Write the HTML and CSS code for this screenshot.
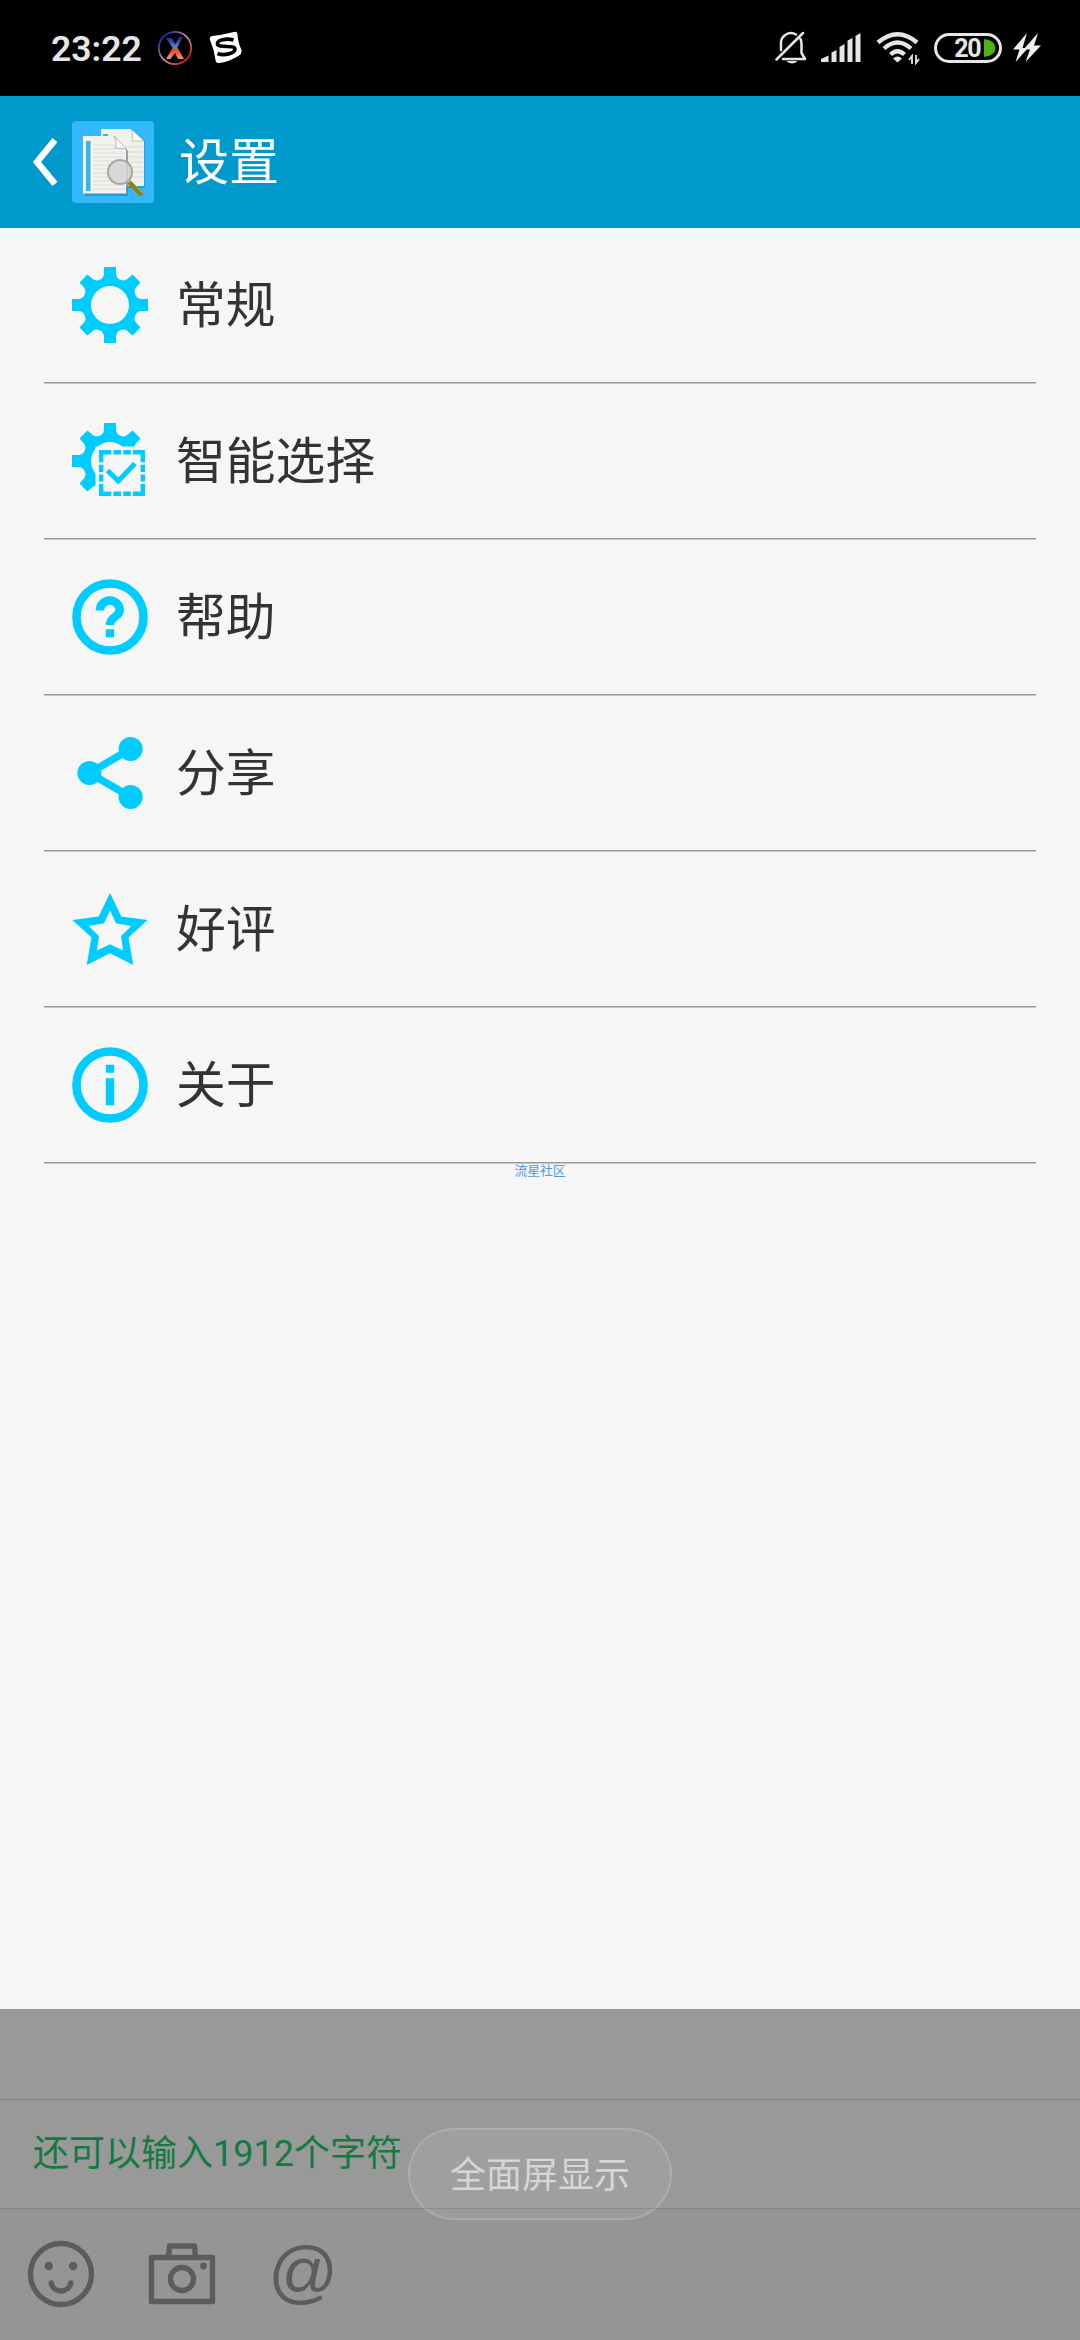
FILE: index.html
```html
<!DOCTYPE html>
<html lang="zh-CN">
<head>
    <meta charset="UTF-8">
    <meta name="viewport" content="width=device-width, initial-scale=1.0">
    <title>设置</title>
    <link rel="stylesheet" href="styles.css">
</head>
<body>
    <div class="status-bar">
        <div class="status-left">
            <span class="time">23:22</span>
            <svg class="logo-x" width="36" height="36" viewBox="0 0 36 36">
                <defs>
                    <linearGradient id="ring" x1="0" y1="0" x2="1" y2="1">
                        <stop offset="0.15" stop-color="#2a2f9c"/>
                        <stop offset="0.5" stop-color="#c79aa8"/>
                        <stop offset="0.85" stop-color="#e8201c"/>
                    </linearGradient>
                    <linearGradient id="cross" x1="0" y1="0" x2="0" y2="1">
                        <stop offset="0.1" stop-color="#2430a0"/>
                        <stop offset="0.45" stop-color="#5f7ccc"/>
                        <stop offset="0.6" stop-color="#f04a24"/>
                        <stop offset="1" stop-color="#ef8f7c"/>
                    </linearGradient>
                </defs>
                <circle cx="18" cy="18" r="16.2" fill="none" stroke="url(#ring)" stroke-width="1.7"/>
                <path d="M9 8h6l3.2 6.2L22 7h4l-5.6 10.5L27 29h-6l-3-6-4.500 6H9l6.600-11z" fill="url(#cross)"/>
            </svg>
            <svg class="logo-s" width="34" height="34" viewBox="0 0 34 34">
                <path d="M3 5Q13 4 25 1Q28 0 28.500 3Q29 12 32.500 19Q33 23 30 24.500Q20 31 10 32Q7 32.500 6.500 29Q5 18 1 9Q0 6 3 5z" fill="#fff"/>
                <path d="M24.500 9C17 7 8 9 8.500 13C9 17.500 26 13.500 26 18C26 22.500 15 25 8.500 22.500" fill="none" stroke="#000" stroke-width="3.700"/>
            </svg>
        </div>
        <div class="status-right">
            <svg width="32" height="34" viewBox="0 0 32 34" fill="none" stroke="#e6e6e6" stroke-width="2.500" stroke-linecap="round" stroke-linejoin="round">
                <path d="M6 19V13A10 10 0 0 1 21 3.500M8 28H30L26.500 22V13Q26.500 10.500 25.500 8M1.500 28.500L28 2"/>
                <path d="M12.500 30.500h9q-4.500 3-9 0z" fill="#e6e6e6" stroke-width="1"/>
            </svg>
            <svg class="signal" width="41" height="30" viewBox="0 0 41 30" fill="#e6e6e6">
                <path d="M1 26L8.500 22.500V29H1zM11.500 19.500L16.500 17V29H11.500zM19.500 14L24.500 11V29H19.500zM27.500 7.500L32.500 5V29H27.500zM35.500 3L40.500 0V29H35.500z"/>
            </svg>
            <svg class="wifi" width="44" height="34" viewBox="0 0 44 34" fill="none" stroke="#e6e6e6" stroke-width="4.300">
                <path d="M2 11.500Q21.500-5 41 11.500M8 17.500Q21.500 5.500 35 17.500M14.500 23.500Q21.500 17 28.500 23.500"/>
                <path d="M17 27.500Q21.500 23.500 26 27.500L21.500 31.500z" fill="#e6e6e6" stroke="none"/>
                <path d="M36 33V25l-3 4M40 24v8l3-4" stroke-width="1.800"/>
            </svg>
            <div class="battery">
                <span>20</span>
                <svg width="13" height="18" viewBox="0 0 13 18"><path d="M1 0Q12 1 12.500 9Q12 17 1 18z" fill="#4bb411"/></svg>
            </div>
            <svg width="30" height="30" viewBox="0 0 30 30" fill="#f0f0f0">
                <path d="M15 0L1 16.500H7.500L3.500 29L16 15H10.500z"/>
                <path d="M26 0L11.500 16.500H18L13.500 29L29 12.500H22z"/>
            </svg>
        </div>
    </div>

    <header class="header">
        <svg class="back" width="24" height="48" viewBox="0 0 24 48" fill="none" stroke="#fff" stroke-width="6.500">
            <path d="M22 2L4 24L22 46"/>
        </svg>
        <svg class="app-icon" width="82" height="82" viewBox="0 0 82 82">
            <rect width="82" height="82" rx="4" fill="#33b9fb"/>
            <path d="M30 9H60L73 20V67H30z" fill="#1c82b8" opacity="0.500"/>
            <path d="M29 8H59L72 20V65H29z" fill="#f1f0ec"/>
            <path d="M31 13h5v3h-5z" fill="#3bb4dc"/>
            <path d="M59 8Q62 14 60 20L72 20z" fill="#fff" stroke="#a9a9a4" stroke-width="0.700"/>
            <path d="M54 26H71M54 31H71M54 36H71M54 41H71M54 46H71M54 51H71M54 56H71" stroke="#d9d7d0"/>
            <path d="M13 17H43L56 30V75H13z" fill="#1c82b8" opacity="0.600"/>
            <path d="M11 15H42L54.500 28V72.500H11z" fill="#f2f1ed"/>
            <path d="M14 20h4.500v50H14z" fill="#35b6de"/>
            <path d="M21 24H42M21 28H44M21 32H53M21 36H53M21 40H53M21 44H53M21 48H53M21 52H53M21 56H53M21 60H53M21 64H53M21 68H53" stroke="#dfddd6"/>
            <path d="M42 15Q46 21 43 27L54.500 28z" fill="#fbfbf9" stroke="#999" stroke-width="0.700"/>
            <path d="M54.500 28V72.500" stroke="#999"/>
            <path d="M57 61L70 74" stroke="#938119" stroke-width="5"/>
            <path d="M58 59L71 72" stroke="#c1b452" stroke-width="1"/>
            <circle cx="48" cy="51" r="12" fill="#d4d4d4" fill-opacity="0.850" stroke="#a6a6a6" stroke-width="2"/>
        </svg>
        <h1>设置</h1>
    </header>

    <ul class="settings">
        <li class="item">
            <svg class="icon" viewBox="-45 -45 90 90">
                <path id="gear" fill-rule="evenodd" d="M-6-38H6V-32A7.200 7.200 0 0 0 18.400-26.900L22.600-30.500L30.500-22.600L26.900-18.400A7.200 7.200 0 0 0 32-6H38V6H32A7.200 7.200 0 0 0 26.900 18.400L30.500 22.600L22.600 30.500L18.400 26.900A7.200 7.200 0 0 0 6 32V38H-6V32A7.200 7.200 0 0 0-18.400 26.900L-22.600 30.500L-30.500 22.600L-26.900 18.400A7.200 7.200 0 0 0-32 6H-38V-6H-32A7.200 7.200 0 0 0-26.900-18.400L-30.500-22.600L-22.600-30.500L-18.400-26.900A7.200 7.200 0 0 0-6-32zM0-19A19 19 0 1 0 0 19A19 19 0 1 0 0-19z"/>
            </svg>
            <span>常规</span>
        </li>
        <li class="item">
            <svg class="icon" viewBox="-45 -45 90 90">
                <use href="#gear"/>
                <rect class="cutout" x="-14.500" y="-14.500" width="59" height="59"/>
                <g class="line">
                    <path stroke-width="4.400" d="M-8.800 1.300V-8.800H1.300M3.500-8.800H11M13.300-8.800H20.800M23-8.800H32.800V1.300M32.800 3.800V11M32.800 13.500V20.500M32.800 23V32.800H23M20.800 32.800H13.300M11 32.800H3.500M1.300 32.800H-8.800V23M-8.800 20.500V13.500M-8.800 11V3.800"/>
                    <path stroke-width="5" d="M-2.500 9.500L8.300 20L25 2.500"/>
                </g>
            </svg>
            <span>智能选择</span>
        </li>
        <li class="item">
            <svg class="icon" viewBox="-45 -45 90 90">
                <g class="line">
                    <circle r="33.500" stroke-width="8.600"/>
                    <path stroke-width="8.500" d="M-10-6.500A9.800 9.800 0 0 1 9.700-7C9.700 0 0-.5 0 8"/>
                </g>
                <path d="M-4.200 12.200H4.200V20.300H-4.200z"/>
            </svg>
            <span>帮助</span>
        </li>
        <li class="item">
            <svg class="icon" viewBox="-45 -45 90 90">
                <path class="line" stroke-width="7.500" d="M20.600-24L-20.600 0L20.600 24"/>
                <circle cx="20.600" cy="-24" r="12"/>
                <circle cx="-20.600" cy="0" r="12"/>
                <circle cx="20.600" cy="24" r="12"/>
            </svg>
            <span>分享</span>
        </li>
        <li class="item">
            <svg class="icon" viewBox="-45 -45 90 90">
                <path fill-rule="evenodd" d="M0-36L11.300-12.500L37.700-9L18.500 8.500L23.300 36L0 24.300L-23.300 36L-18.500 8.500L-37.700-9L-11.300-12.500zM0-18.500L-6-5.700L-21.300-3L-11 7.300L-13.200 21.500L0 15.300L13.200 21.500L11 7.300L21.300-3L6-5.700z"/>
            </svg>
            <span>好评</span>
        </li>
        <li class="item">
            <svg class="icon" viewBox="-45 -45 90 90">
                <circle class="line" r="33.500" stroke-width="8.600"/>
                <path d="M-4.200-20.200H4.200V-12.200H-4.200zM-4.200-6.800H4.200V20.300H-4.200z"/>
            </svg>
            <span>关于</span>
        </li>
    </ul>
    <p class="community">流星社区</p>

    <div class="editor">
        <div class="editor-input"></div>
        <div class="editor-count">还可以输入1912个字符</div>
        <div class="editor-tools">
            <svg width="68" height="68" viewBox="-34 -34 68 68" fill="none" stroke="#5c5c5c" stroke-width="5.400" stroke-linecap="round">
                <circle r="30.500"/>
                <path d="M-9.800 9A10 10 0 0 0 9.800 9"/>
                <circle cx="-12.200" cy="-8" r="4.200" fill="#5c5c5c" stroke="none"/>
                <circle cx="12.200" cy="-8" r="4.200" fill="#5c5c5c" stroke="none"/>
            </svg>
            <svg width="68" height="68" viewBox="-34 -34 68 68" fill="none" stroke="#5c5c5c" stroke-width="5.400" stroke-linejoin="round">
                <path d="M-30.500-16.500H30.500V27.500H-30.500zM-13.500-17L-12.500-28H12.500L13.500-17"/>
                <circle cy="5" r="11.500"/>
                <circle cx="21.500" cy="-8" r="3.400" fill="#5c5c5c" stroke="none"/>
            </svg>
            <span class="at">@</span>
        </div>
        <div class="toast">全面屏显示</div>
    </div>
</body>
</html>
```
FILE: styles.css
```css
:root {
    --header-color: #0099cc;
    --icon-color: #00ccff;
    --page-color: #f6f6f6;
    --text-color: #333333;
}

* {
    margin: 0;
    padding: 0;
    box-sizing: border-box;
}

body {
    width: 1080px;
    height: 2340px;
    display: flex;
    flex-direction: column;
    overflow: hidden;
    background-color: var(--page-color);
    color: var(--text-color);
    font-family: Roboto, 'Noto Sans CJK SC', sans-serif;
}

svg {
    display: block;
    flex-shrink: 0;
}

.status-bar {
    height: 96px;
    padding: 0 38px 0 51px;
    display: flex;
    justify-content: space-between;
    align-items: center;
    background-color: #000;
}

.status-left,
.status-right {
    display: flex;
    align-items: center;
}

.time {
    width: 106px;
    padding-top: 1px;
    color: #e6e6e6;
    font-size: 35.5px;
    font-weight: 600;
    line-height: 42px;
}

.logo-s {
    margin-left: 16px;
}

.signal {
    margin-left: 13px;
}

.wifi {
    margin-left: 15px;
}

.battery {
    width: 68px;
    height: 30px;
    margin: 0 10px 0 14px;
    padding-right: 3px;
    display: flex;
    justify-content: flex-end;
    align-items: center;
    border: 3px solid #e6e6e6;
    border-radius: 15px;
    color: #e6e6e6;
    font-size: 25px;
    font-weight: 700;
    line-height: 24px;
    letter-spacing: -1.5px;
}

.battery span {
    padding-top: 1px;
}

.battery svg {
    margin-left: 3px;
}

.header {
    height: 132px;
    padding-left: 33px;
    display: flex;
    align-items: center;
    background-color: var(--header-color);
    color: #fff;
}

.app-icon {
    margin-left: 15px;
}

.header h1 {
    margin-left: 25px;
    padding-top: 2px;
    font-size: 50px;
    font-weight: 400;
    line-height: 60px;
}

.settings {
    list-style: none;
}

.item {
    height: 156px;
    margin: 0 44px;
    padding: 0 0 1px 21px;
    display: flex;
    align-items: center;
    border-bottom: 1px solid #c8c8c8;
    box-shadow: inset 0 -1px #999;
    font-size: 49.8px;
    line-height: 60px;
}

.item span {
    margin-left: 21px;
    padding-top: 2px;
}

.icon {
    width: 90px;
    height: 90px;
    fill: var(--icon-color);
}

.line {
    fill: none;
    stroke: var(--icon-color);
}

.cutout {
    fill: var(--page-color);
}

.community {
    color: #4b9ae6;
    font-size: 12.8px;
    line-height: 13px;
    text-align: center;
}

.editor {
    height: 331px;
    margin-top: auto;
    position: relative;
    background-color: #999;
}

.editor-input {
    height: 91px;
    border-bottom: 1px solid #808080;
}

.editor-count {
    height: 109px;
    padding: 0 0 8px 33px;
    display: flex;
    align-items: center;
    border-bottom: 1px solid #838383;
    color: #147a41;
    font-size: 36px;
}

.editor-tools {
    height: 131px;
    padding: 0 0 1px 27px;
    display: flex;
    align-items: center;
    gap: 53px;
    background-color: #959595;
}

.at {
    margin-left: -2px;
    padding-bottom: 5px;
    color: #5c5c5c;
    font-family: 'Liberation Sans', sans-serif;
    font-size: 69px;
    font-style: italic;
    line-height: 68px;
}

/* sits over the editor, across the divider */
.toast {
    position: absolute;
    left: 408px;
    top: 119px;
    width: 264px;
    height: 92px;
    padding-bottom: 5px;
    display: flex;
    justify-content: center;
    align-items: center;
    border: 2px solid rgba(255, 255, 255, 0.15);
    border-radius: 46px;
    background-color: rgba(255, 255, 255, 0.06);
    color: #d6d6d6;
    font-size: 36px;
}
```
